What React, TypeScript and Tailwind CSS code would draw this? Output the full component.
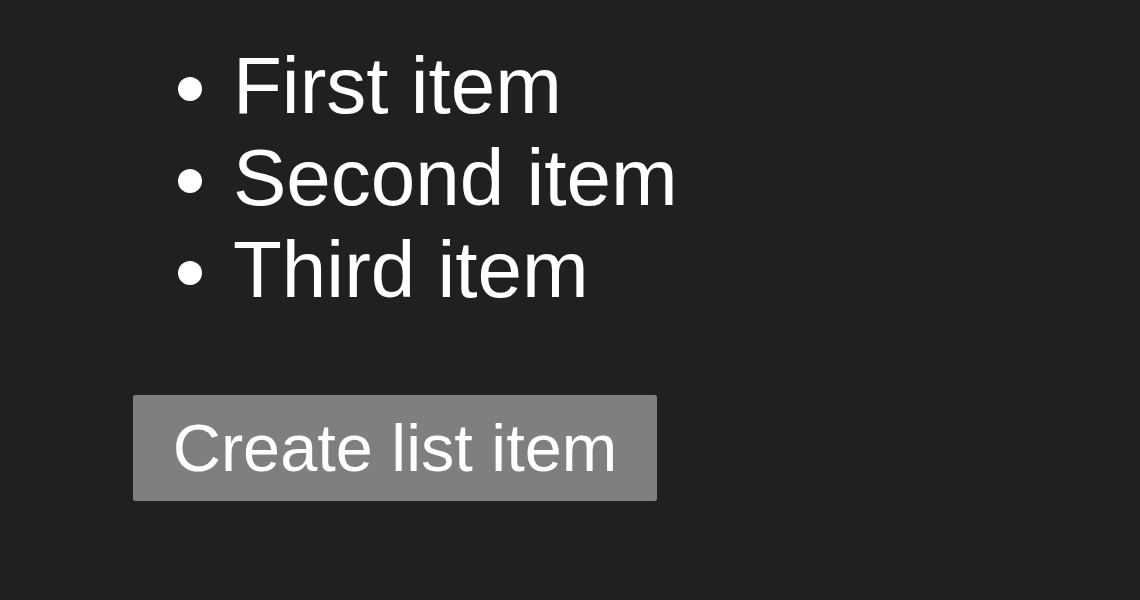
export default function App() {
  return (
    <div className="w-[1140px] h-[600px] bg-[#202020] text-white pl-[133px] pt-[40px]" style={{ fontFamily: '"Liberation Sans", Arial, sans-serif' }}>
      <ul className="list-disc pl-[100px] m-0 text-[80px] leading-[92px]">
        <li>First item</li>
        <li>Second item</li>
        <li>Third item</li>
      </ul>
      <button className="mt-[79px] w-[524px] h-[106px] bg-[#7f7f7f] rounded-[2px] text-white text-[66.67px] leading-[76px] text-center">
        Create list item
      </button>
    </div>
  );
}
